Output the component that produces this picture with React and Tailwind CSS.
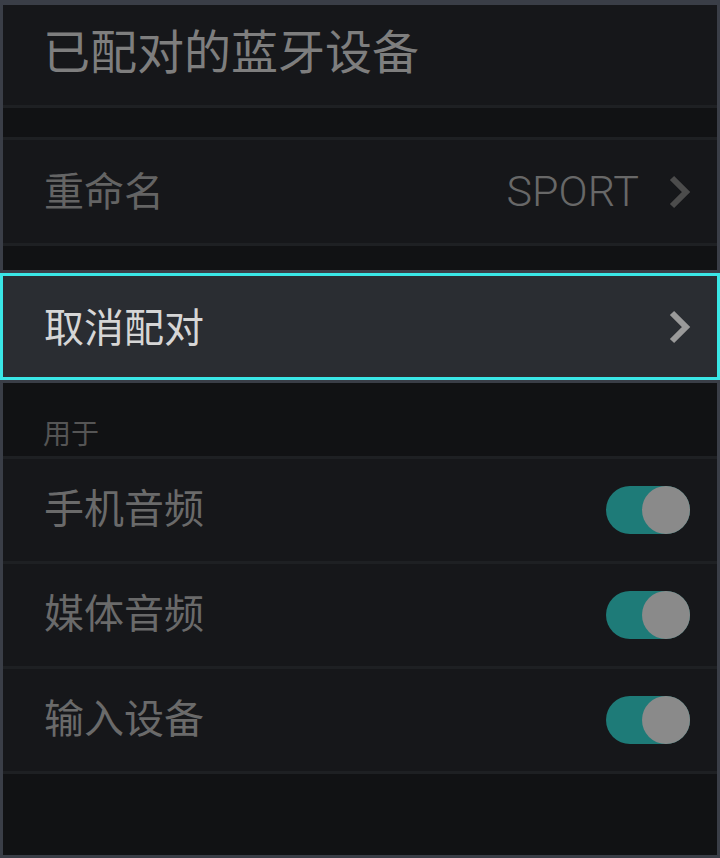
import React from "react";

const cjk = { fontFamily: '"Noto Sans CJK SC", "Noto Sans", sans-serif' };

function Chevron({ color }) {
  return (
    <svg width="22" height="34" viewBox="0 0 22 34" className="shrink-0">
      <polyline
        points="3,3 17,17 3,31"
        fill="none"
        stroke={color}
        strokeWidth="6"
        strokeLinejoin="miter"
      />
    </svg>
  );
}

function Toggle() {
  return (
    <div className="flex h-[48px] w-[84px] justify-end rounded-full bg-[#1e7b78]">
      <div className="h-[48px] w-[48px] rounded-full bg-[#8a8a8a]" />
    </div>
  );
}

const Line = () => <div className="h-[3px] bg-[#1e2023]" />;

function ToggleRow({ label }) {
  return (
    <>
      <div className="flex h-[102px] items-center justify-between bg-[#16171a] pl-[41px] pr-[27px]">
        <span className="pb-[8px] text-[40px] leading-none text-[#6a6a6a]">{label}</span>
        <Toggle />
      </div>
      <Line />
    </>
  );
}

export default function App() {
  // 已配对设备的设置页，"取消配对" 为当前焦点
  return (
    <div className="flex h-[858px] w-[720px] flex-col bg-[#3a3e47] px-[3px] pb-[3px] pt-[5px]" style={cjk}>
      <div className="flex flex-col">
        <div className="flex h-[100px] items-center bg-[#16171a] pb-[14px] pl-[40px]">
          <span className="text-[47px] leading-none text-[#7e7e7e]">已配对的蓝牙设备</span>
        </div>
        <Line />
        <div className="h-[29px] bg-[#111214]" />
        <Line />
        <div className="flex h-[103px] items-center bg-[#16171a] pl-[41px] pr-[26px]">
          <span className="flex-1 pb-[6px] text-[40px] leading-none text-[#646464]">重命名</span>
          <span
            className="mr-[30px] text-[43px] font-light leading-none text-[#686868]"
            style={{ fontFamily: "Roboto, 'Liberation Sans', sans-serif" }}
          >
            SPORT
          </span>
          <Chevron color="#4c4c4c" />
        </div>
        <Line />
        <div className="h-[24px] bg-[#111214]" />
      </div>

      <div className="mt-[3px] -mx-[3px] flex h-[107px] items-center border-[3px] border-[#3ae6e6] bg-[#2a2d32] pl-[41px] pr-[26px]">
        <span className="flex-1 pb-[4px] text-[40px] leading-none text-[#d6d6d6]">取消配对</span>
        <Chevron color="#9a9a9a" />
      </div>

      <div className="mt-[3px] flex flex-1 flex-col bg-[#111214]">
        <div className="flex h-[73px] items-end pb-[10px] pl-[40px]">
          <span className="text-[28px] leading-none text-[#555555]">用于</span>
        </div>
        <Line />
        <ToggleRow label="手机音频" />
        <ToggleRow label="媒体音频" />
        <ToggleRow label="输入设备" />
      </div>
    </div>
  );
}
